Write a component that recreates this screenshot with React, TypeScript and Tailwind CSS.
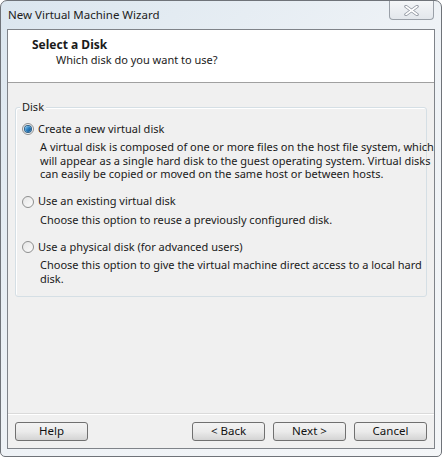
import React from "react";

const font = { fontFamily: '"Noto Sans", "Open Sans", sans-serif' };

const Radio = ({ checked }: { checked?: boolean }) => (
  <span className="relative inline-flex h-[12px] w-[12px] shrink-0 items-center justify-center rounded-full border border-[#8e8f8f] bg-gradient-to-br from-[#e6e6e6] to-[#fbfbfb]">
    {checked && (
      <span className="h-[6px] w-[6px] rounded-full bg-gradient-to-br from-[#8fd0f4] via-[#2a7fc0] to-[#0d4f8a] ring-1 ring-[#2b5f88]" />
    )}
  </span>
);

const Option = ({
  label,
  lines,
  checked,
}: {
  label: string;
  lines: string[];
  checked?: boolean;
}) => (
  <div className="flex flex-col">
    <label className="flex h-[14px] items-center gap-[4px] pl-[6px]">
      <Radio checked={checked} />
      <span>{label}</span>
    </label>
    <p className="mt-[4px] whitespace-nowrap pl-[24px] leading-[13.5px]">
      {lines.map((l, i) => (
        <React.Fragment key={l}>
          {i > 0 && <br />}
          {l}
        </React.Fragment>
      ))}
    </p>
  </div>
);

const Btn = ({ children }: { children: React.ReactNode }) => (
  <button className="flex h-[19px] w-[73px] items-center justify-center rounded-[3px] border border-[#707070] bg-gradient-to-b from-[#f3f3f3] via-[#ebebeb] to-[#d4d4d4] text-[11.5px] text-[#111]">
    {children}
  </button>
);

export default function App() {
  return (
    <div
      className="flex h-[457px] w-[442px] flex-col overflow-hidden rounded-t-[7px] rounded-b-[5px] border border-[#6f7379] bg-gradient-to-br from-[#dbe6ef] via-[#eef2f6] to-[#f4f6f8] text-[11px] text-[#1a1a1a]"
      style={font}
    >
      <div className="flex h-[28px] shrink-0 items-start justify-between">
        <span className="pl-[7px] pt-[5px] text-[11.5px] text-[#222]">New Virtual Machine Wizard</span>
        <div className="mr-[7px] flex h-[19px] w-[45px] items-center justify-center rounded-b-[4px] border border-t-0 border-[#9aa0a8] bg-gradient-to-b from-[#f4f6f8] to-[#e3e7ec]">
          <svg width="15" height="11" viewBox="0 0 15 11">
            <path
              d="M2 1.5 L13 9.5 M13 1.5 L2 9.5"
              stroke="#9096a0"
              strokeWidth="3.4"
              strokeLinecap="round"
            />
            <path
              d="M2 1.5 L13 9.5 M13 1.5 L2 9.5"
              stroke="#ffffff"
              strokeWidth="1.6"
              strokeLinecap="round"
            />
          </svg>
        </div>
      </div>

      <div className="mx-[6px] flex h-[420px] flex-col border border-[#7f8389] bg-[#f0f0f0]">
        <div className="flex h-[53px] shrink-0 flex-col border-b border-[#a0a0a0] bg-white pl-[24px] pt-[7px]">
          <span className="text-[12px] font-bold leading-[15px]">Select a Disk</span>
          <span className="pl-[24px] leading-[15px]">Which disk do you want to use?</span>
        </div>

        <div className="flex-1 px-[7px] pt-[24px]">
          <div className="relative h-[190px] rounded-[3px] border border-[#d5dfe5] pt-[14px] shadow-[inset_1px_1px_0_#fff]">
            <span className="absolute -top-[8px] left-[4px] bg-[#f0f0f0] px-[2px] leading-[14px]">Disk</span>
            <div className="flex flex-col gap-[14px]">
              <Option
                checked
                label="Create a new virtual disk"
                lines={[
                  "A virtual disk is composed of one or more files on the host file system, which",
                  "will appear as a single hard disk to the guest operating system. Virtual disks",
                  "can easily be copied or moved on the same host or between hosts.",
                ]}
              />
              <Option
                label="Use an existing virtual disk"
                lines={["Choose this option to reuse a previously configured disk."]}
              />
              <Option
                label="Use a physical disk (for advanced users)"
                lines={[
                  "Choose this option to give the virtual machine direct access to a local hard",
                  "disk.",
                ]}
              />
            </div>
          </div>
        </div>

        <div className="flex h-[35px] shrink-0 items-center justify-between border-t border-[#dadada] px-[7px] shadow-[inset_0_1px_0_#fff]">
          <Btn>Help</Btn>
          <div className="flex gap-[8px]">
            <Btn>&lt; Back</Btn>
            <Btn>Next &gt;</Btn>
            <Btn>Cancel</Btn>
          </div>
        </div>
      </div>
    </div>
  );
}
